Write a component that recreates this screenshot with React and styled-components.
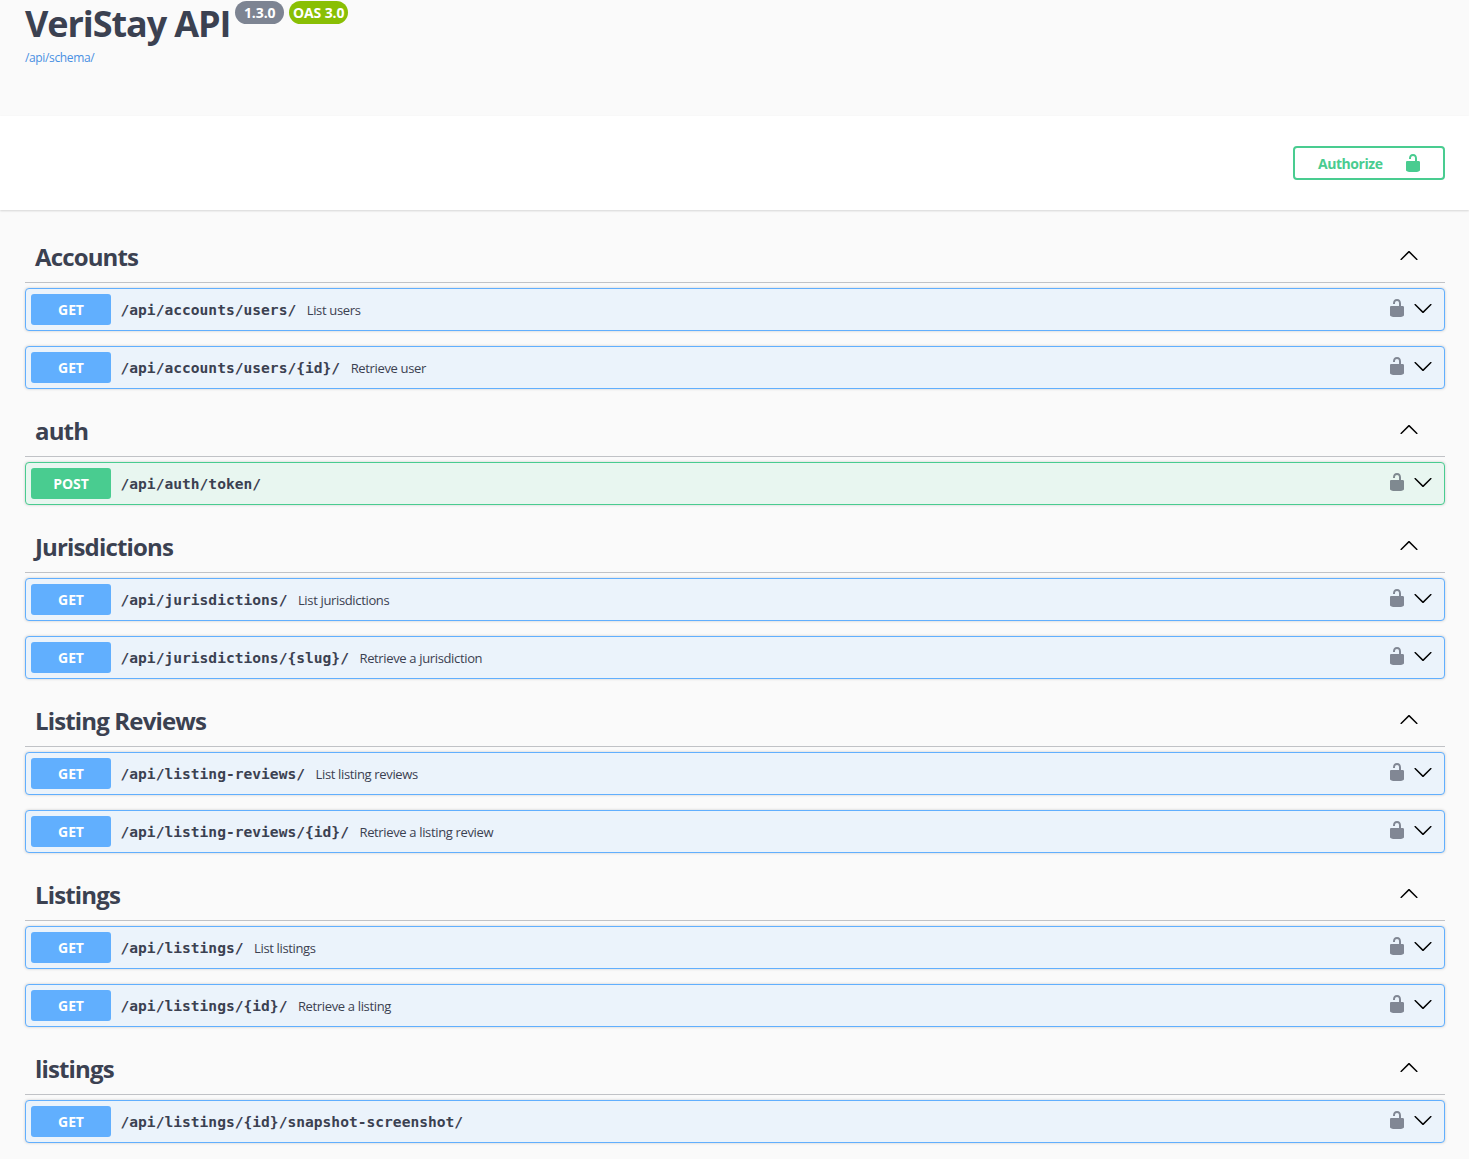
import React from 'react';
import styled, { createGlobalStyle } from 'styled-components';

const Global = createGlobalStyle`
  html, body { margin: 0; padding: 0; background: #fafafa; }
  body { font-family: "Open Sans", "Noto Sans", sans-serif; color: #3b4151; }
  * { box-sizing: border-box; }
`;
const Page = styled.div`width: 1469px; height: 1159px; overflow: hidden; background: #fafafa;`;
const Info = styled.header`height: 116px; padding: 0 25px; background: #fafafa;`;
const TitleRow = styled.div`display: flex; align-items: flex-start; height: 46px;`;
const Title = styled.h1`margin: 0; font-size: 36px; line-height: 47px; height: 46px; font-weight: 700; letter-spacing: -1.08px; color: #3b4151;`;
const Badge = styled.span`
  display: inline-block; margin-left: ${p => p.$ml}px; margin-top: 1px; height: 23px; padding: 0 ${p => p.$pad}px;
  border-radius: 12px; background: ${p => p.$bg}; color: #fff;
  font-size: 14px; line-height: 23px; font-weight: 700; letter-spacing: -.1px;
`;
const SchemaLink = styled.a`display: block; margin-top: 4px; font-size: 12px; line-height: 16px; letter-spacing: -.35px; color: #4990e2; text-decoration: none;`;
const AuthBar = styled.div`
  height: 94px; background: #fff; box-shadow: 0 1px 2px rgba(0,0,0,.15);
  display: flex; justify-content: flex-end; padding: 30px 24px 0 0; position: relative;
`;
const AuthButton = styled.button`
  width: 152px; height: 34px; border: 2px solid #49cc90; border-radius: 4px; background: transparent;
  color: #49cc90; font: 700 14px "Open Sans", sans-serif; letter-spacing: -.45px; display: flex; align-items: center;
  justify-content: flex-start; padding: 0 0 0 23px;
  svg { margin-left: 20px; fill: #49cc90; }
`;
const Main = styled.main`padding: 20px 24px 0 25px;`;
const TagHeader = styled.div`
  height: 53px; border-bottom: 1px solid rgba(59,65,81,.3); display: flex; align-items: center;
  justify-content: space-between; padding: 0 26px 0 10px;
`;
const TagName = styled.h3`margin: 2px 0 0; font-size: 24px; line-height: 32px; font-weight: 700; letter-spacing: -.85px; color: #3b4151;`;
const Section = styled.section``;
const Ops = styled.div`padding-top: 5px;`;
const Op = styled.div`
  height: 43px; margin-bottom: 15px; border: 1px solid ${p => p.$c}; border-radius: 4px;
  background: ${p => p.$bg}; display: flex; align-items: center; padding: 0 11px 0 5px;
  box-shadow: 0 0 3px rgba(0,0,0,.19);
`;
const Method = styled.span`
  width: 80px; height: 31px; border-radius: 3px; background: ${p => p.$c}; color: #fff;
  font-size: 14px; font-weight: 700; letter-spacing: -.1px; display: flex; align-items: center; justify-content: center; flex: none;
`;
const Path = styled.span`
  margin-left: 9.5px; font: 700 14.6px "DejaVu Sans Mono", monospace; color: #3b4151; white-space: nowrap;
`;
const Desc = styled.span`margin-left: 10.5px; font-size: 13px; letter-spacing: -.35px; color: #3b4151; white-space: nowrap;`;
const Actions = styled.div`margin-left: auto; display: flex; align-items: center; gap: 6px; margin-top: -3px; svg { display: block; }`;

const Lock = ({ size = 20, fill = '#3b4151', opacity = .6 }) => (
  <svg width={size} height={size} viewBox="0 0 20 20" fill={fill} opacity={opacity}>
    <path d="M15.8 8H14V5.6C14 2.703 12.665 1 10 1 7.334 1 6 2.703 6 5.6V6h2v-.801C8 3.754 8.797 3 10 3c1.203 0 2 .754 2 2.199V8H4c-.553 0-1 .646-1 1.199V17c0 .549.428 1.139.951 1.307l1.197.387C5.672 18.861 6.55 19 7.1 19h5.8c.549 0 1.428-.139 1.951-.307l1.196-.387c.524-.167.953-.757.953-1.306V9.199C17 8.646 16.352 8 15.8 8z" />
  </svg>
);
const Arrow = ({ up }) => (
  <svg width="20" height="20" viewBox="0 0 20 20" fill="#000" style={up ? { transform: 'rotate(180deg)' } : undefined}>
    <path d="M17.418 6.109c.272-.268.709-.268.979 0s.271.701 0 .969l-7.908 7.83c-.27.268-.707.268-.979 0l-7.908-7.83c-.27-.268-.27-.701 0-.969.271-.268.709-.268.979 0L10 13.25l7.418-7.141z" />
  </svg>
);

const GET = { c: '#61affe', bg: '#ebf3fb', m: 'GET' };
const POST = { c: '#49cc90', bg: '#e8f6f0', m: 'POST' };
const sections = [
  ['Accounts', [[GET, '/api/accounts/users/', 'List users'], [GET, '/api/accounts/users/{id}/', 'Retrieve user']]],
  ['auth', [[POST, '/api/auth/token/', '']]],
  ['Jurisdictions', [[GET, '/api/jurisdictions/', 'List jurisdictions'], [GET, '/api/jurisdictions/{slug}/', 'Retrieve a jurisdiction']]],
  ['Listing Reviews', [[GET, '/api/listing-reviews/', 'List listing reviews'], [GET, '/api/listing-reviews/{id}/', 'Retrieve a listing review']]],
  ['Listings', [[GET, '/api/listings/', 'List listings'], [GET, '/api/listings/{id}/', 'Retrieve a listing']]],
  ['listings', [[GET, '/api/listings/{id}/snapshot-screenshot/', '']]],
];

export default function App() {
  return (
    <Page>
      <Global />
      <Info>
        <TitleRow>
          <Title>VeriStay API</Title>
          <Badge $bg="#7d8492" $ml={5} $pad={8.5}>1.3.0</Badge>
          <Badge $bg="#89bf04" $ml={5} $pad={4}>OAS 3.0</Badge>
        </TitleRow>
        <SchemaLink href="#">/api/schema/</SchemaLink>
      </Info>
      <AuthBar>
        <AuthButton>Authorize<Lock fill="#49cc90" opacity={1} /></AuthButton>
      </AuthBar>
      <Main>
        {sections.map(([name, ops]) => (
          <Section key={name}>
            <TagHeader>
              <TagName>{name}</TagName>
              <Arrow up />
            </TagHeader>
            <Ops>
              {ops.map(([k, path, desc]) => (
                <Op key={path} $c={k.c} $bg={k.bg}>
                  <Method $c={k.c}>{k.m}</Method>
                  <Path>{path}</Path>
                  {desc && <Desc>{desc}</Desc>}
                  <Actions><Lock /><Arrow /></Actions>
                </Op>
              ))}
            </Ops>
          </Section>
        ))}
      </Main>
    </Page>
  );
}
